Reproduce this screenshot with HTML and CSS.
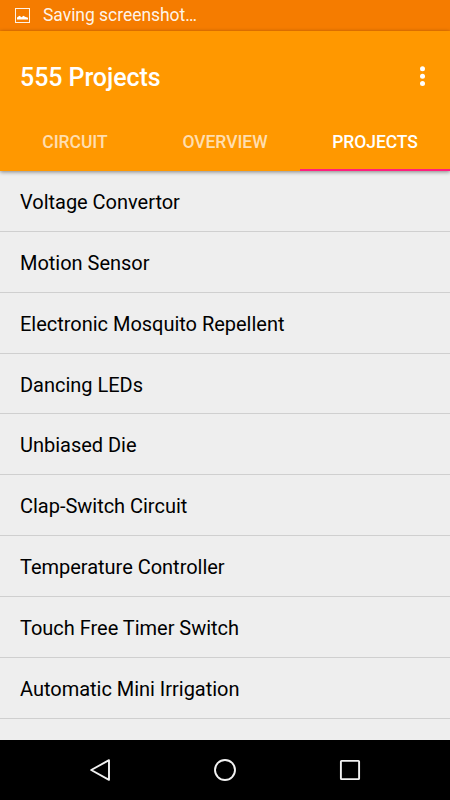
FILE: index.html
```
<!DOCTYPE html>
<html lang="en">
<head>
    <meta charset="UTF-8">
    <meta name="viewport" content="width=device-width, initial-scale=1.0">
    <title>555 Projects</title>
    <link rel="stylesheet" href="styles.css">
</head>
<body>
    <div class="status-bar">
        <svg class="status-icon" width="15" height="15" viewBox="0 0 15 15">
            <rect x="0.5" y="0.5" width="14" height="14" fill="none" stroke="#fff" stroke-opacity="0.9"/>
            <path d="M2 11.5 V9.5 L4.5 7.8 L6.5 9.3 L8.5 7.8 L10 8.8 L13 9.8 V11.5 Z" fill="#fff"/>
        </svg>
        <span>Saving screenshot…</span>
    </div>
    <header class="app-bar">
        <div class="toolbar">
            <h1>555 Projects</h1>
            <svg class="menu-icon" width="6" height="20" viewBox="0 0 6 20">
                <circle cx="3.5" cy="1.8" r="2.5" fill="#fff"/>
                <circle cx="3.5" cy="9.2" r="2.5" fill="#fff"/>
                <circle cx="3.5" cy="16.6" r="2.5" fill="#fff"/>
            </svg>
        </div>
        <nav class="tabs">
            <div class="tab">CIRCUIT</div>
            <div class="tab">OVERVIEW</div>
            <div class="tab active">PROJECTS</div>
        </nav>
    </header>
    <ul class="project-list">
        <li>Voltage Convertor</li>
        <li>Motion Sensor</li>
        <li>Electronic Mosquito Repellent</li>
        <li>Dancing LEDs</li>
        <li>Unbiased Die</li>
        <li>Clap-Switch Circuit</li>
        <li>Temperature Controller</li>
        <li>Touch Free Timer Switch</li>
        <li>Automatic Mini Irrigation</li>
    </ul>
    <div class="nav-bar">
        <svg width="24" height="24" viewBox="0 0 24 24">
            <path d="M21 2.2 L3.2 12 L21 21.8 Z"/>
        </svg>
        <svg width="24" height="24" viewBox="0 0 24 24">
            <circle cx="12" cy="12" r="10"/>
        </svg>
        <svg width="24" height="24" viewBox="0 0 24 24">
            <rect x="2.9" y="2.9" width="18.2" height="18.2" rx="0.6"/>
        </svg>
    </div>
</body>
</html>
```
FILE: styles.css
```
body {
    display: flex;
    flex-direction: column;
    height: 100vh;
    margin: 0;
    background-color: #eeeeee;
    color: black;
    font-family: Roboto, sans-serif;
    overflow: hidden;
}
.status-bar {
    display: flex;
    align-items: center;
    flex: none;
    gap: 13px;
    box-sizing: border-box;
    height: 31px;
    padding: 0 0 1px 15px;
    background-color: #f57c00;
    color: rgba(255, 255, 255, 0.93);
    font-size: 17.5px;
    letter-spacing: -0.04px;
}
.status-bar span {
    line-height: 30px;
}
.app-bar {
    flex: none;
    height: 140px;
    background-color: #ff9800;
    color: white;
    box-shadow: 0 1px 4px rgba(0, 0, 0, 0.45);
}
.toolbar {
    display: flex;
    align-items: center;
    justify-content: space-between;
    height: 92px;
    padding: 0 25px 0 20px;
}
.menu-icon {
    overflow: visible;
}
h1 {
    margin: 0;
    font-size: 25px;
    font-weight: 500;
    letter-spacing: -0.08px;
}
.tabs {
    display: flex;
    height: 48px;
}
.tab {
    flex: 1;
    box-sizing: border-box;
    color: rgba(255, 255, 255, 0.7);
    font-size: 17.5px;
    font-weight: 500;
    letter-spacing: -0.05px;
    line-height: 38px;
    text-align: center;
}
.tab.active {
    border-bottom: 2px solid #ff1f7d;
    color: white;
}
.project-list {
    flex: 1;
    margin: 0;
    padding: 0;
    list-style: none;
}
.project-list li {
    box-sizing: border-box;
    height: 60.86px;
    padding-left: 20px;
    border-bottom: 1px solid #cfcfcf;
    font-size: 20px;
    letter-spacing: -0.02px;
    line-height: 62px;
}
.nav-bar {
    display: flex;
    align-items: center;
    justify-content: center;
    flex: none;
    gap: 101px;
    height: 60px;
    background-color: black;
}
.nav-bar svg {
    fill: none;
    stroke: #f2f2f2;
    stroke-width: 1.9;
    stroke-linejoin: round;
}
```
